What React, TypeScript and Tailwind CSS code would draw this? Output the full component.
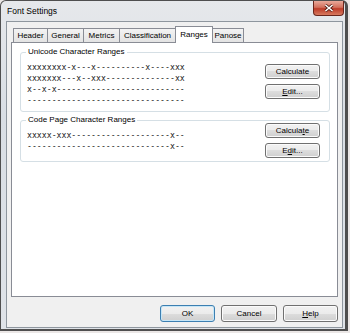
import React from "react";

// Win7-style "Font Settings" dialog, Ranges tab selected

const btnFace =
  "flex items-center justify-center rounded-[3px] border border-[#707070] bg-[linear-gradient(180deg,#f2f2f2_0%,#ebebeb_50%,#dddddd_50%,#cfcfcf_100%)] shadow-[inset_0_0_0_1px_#fbfbfb] text-black";

function SmallButton({ children }: { children: React.ReactNode }) {
  return <div className={`w-[55px] h-[15px] leading-[10px] ${btnFace}`}>{children}</div>;
}

function Ranges({ lines }: { lines: string[] }) {
  return (
    <div className="font-['DejaVu_Sans_Mono',monospace] text-[8.2px] leading-[11px] text-[#222] whitespace-pre">
      {lines.map((l, i) => (
        <div key={i}>{l}</div>
      ))}
    </div>
  );
}

const unicodeRows = [
  "xxxxxxxx-x---x----------x----xxx",
  "xxxxxxx---x--xxx--------------xx",
  "x--x-x--------------------------",
  "--------------------------------",
];

const codePageRows = [
  "xxxxx-xxx--------------------x--",
  "-----------------------------x--",
];

export default function App() {
  return (
    <div className="w-[350px] h-[333px] bg-[#ebe7e6] font-['Liberation_Sans',Arial,sans-serif] text-[8px] text-black">
      <div className="w-[348px] h-[331px] flex flex-col rounded-t-[6px] border border-[#4f4f4f] border-r-[3px] border-b-[2px] bg-[linear-gradient(180deg,#e6e8eb_0%,#d9dee4_35%,#dfe3e8_100%)]">
        {/* title bar */}
        <div className="h-[20px] flex justify-between items-start">
          <span className="pl-[6px] pt-[5px] text-[8.5px] leading-[10px]">Font Settings</span>
          <div className="mr-[1px] w-[31px] h-[15px] flex items-center justify-center rounded-b-[4px] border border-t-0 border-[#6a261c] bg-[linear-gradient(180deg,#e9a99a_0%,#d2705d_45%,#bd3b28_55%,#d77a5f_100%)]">
            <svg width="10" height="8" viewBox="0 0 10 8">
              <path d="M1.5 1 L8.5 7 M8.5 1 L1.5 7" stroke="#4a1a12" strokeWidth="3" />
              <path d="M1.5 1 L8.5 7 M8.5 1 L1.5 7" stroke="#ffffff" strokeWidth="1.6" />
            </svg>
          </div>
        </div>

        {/* client area */}
        <div className="ml-[5px] w-[337px] h-[307px] border border-[#8e969e] bg-[#f0f0f0] flex flex-col px-[4px] pt-[4px]">
          {/* tabs */}
          <div className="h-[16px] flex items-end pl-[2px]">
            <div className="w-[35px] h-[14px] flex items-center justify-center border border-b-0 border-[#898c95] bg-[linear-gradient(180deg,#f3f3f3,#e3e3e3)]">Header</div>
            <div className="w-[36px] h-[14px] flex items-center justify-center border border-l-0 border-b-0 border-[#898c95] bg-[linear-gradient(180deg,#f3f3f3,#e3e3e3)]">General</div>
            <div className="w-[36px] h-[14px] flex items-center justify-center border border-l-0 border-b-0 border-[#898c95] bg-[linear-gradient(180deg,#f3f3f3,#e3e3e3)]">Metrics</div>
            <div className="w-[56px] h-[14px] flex items-center justify-center border border-l-0 border-b-0 border-[#898c95] bg-[linear-gradient(180deg,#f3f3f3,#e3e3e3)]">Classification</div>
            <div className="relative z-10 -ml-px -mb-px w-[38px] h-[17px] flex items-center justify-center pb-[1px] border border-b-0 border-[#898c95] bg-white">Ranges</div>
            <div className="w-[31px] h-[14px] flex items-center justify-center border border-l-0 border-b-0 border-[#898c95] bg-[linear-gradient(180deg,#f3f3f3,#e3e3e3)]">Panose</div>
          </div>

          {/* tab panel */}
          <div className="w-[327px] h-[255px] border border-[#898c95] bg-white flex flex-col pl-[8px] pt-[9px]">
            {/* Unicode group */}
            <div className="relative w-[310px] h-[60px] rounded-[3px] border border-[#d5dfe5] flex justify-between pl-[6px] pr-[9px] pt-[9px]">
              <span className="absolute -top-[6px] left-[5px] px-[2px] bg-white leading-[10px]">Unicode Character Ranges</span>
              <Ranges lines={unicodeRows} />
              <div className="flex flex-col gap-[5px] mt-[2px]">
                <SmallButton>Calculate</SmallButton>
                <SmallButton>
                  <span className="underline">E</span>dit...
                </SmallButton>
              </div>
            </div>

            {/* Code page group */}
            <div className="relative mt-[8px] w-[310px] h-[42px] rounded-[3px] border border-[#d5dfe5] flex justify-between items-start pl-[6px] pr-[9px] pt-[2px]">
              <span className="absolute -top-[6px] left-[5px] px-[2px] bg-white leading-[10px]">Code Page Character Ranges</span>
              <div className="mt-[7px]">
                <Ranges lines={codePageRows} />
              </div>
              <div className="flex flex-col gap-[5px]">
                <SmallButton>
                  Calcula<span className="underline">t</span>e
                </SmallButton>
                <SmallButton>
                  E<span className="underline">d</span>it...
                </SmallButton>
              </div>
            </div>
          </div>

          {/* dialog buttons */}
          <div className="mt-[8px] flex justify-end gap-[6px]">
            <div className="w-[55px] h-[17px] flex items-center justify-center rounded-[3px] border border-[#3c7fb1] bg-[linear-gradient(180deg,#f2f2f2_0%,#ebebeb_50%,#dddddd_50%,#cfcfcf_100%)] shadow-[inset_0_0_0_1px_#c6e6f7]">OK</div>
            <div className={`w-[56px] h-[17px] ${btnFace}`}>Cancel</div>
            <div className={`w-[55px] h-[17px] ${btnFace}`}>
              <span>
                <span className="underline">H</span>elp
              </span>
            </div>
          </div>
        </div>
      </div>
    </div>
  );
}
